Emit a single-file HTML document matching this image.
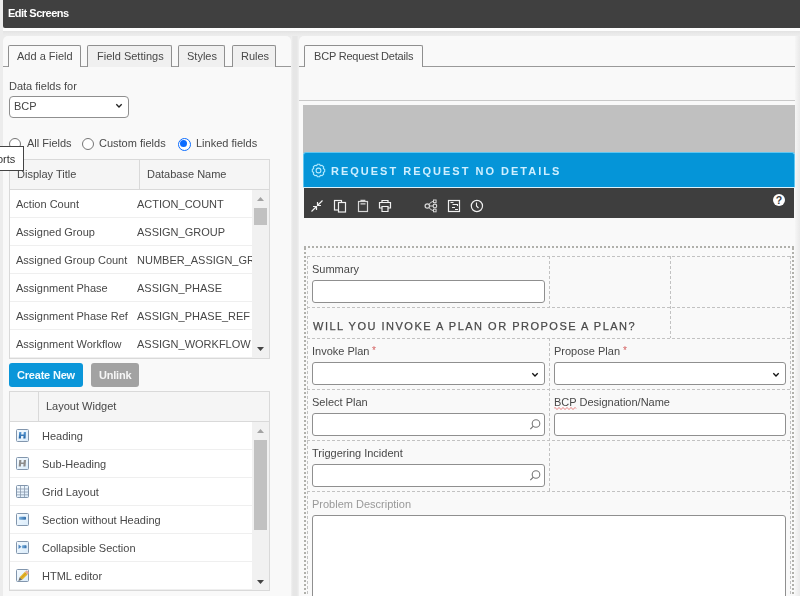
<!DOCTYPE html>
<html><head><meta charset="utf-8">
<style>
*{box-sizing:border-box;margin:0;padding:0}
html,body{width:800px;height:596px;overflow:hidden}
body{position:relative;background:#ececec;font-family:"Liberation Sans",sans-serif;font-size:11px;color:#484848}
.a{position:absolute}
.t{position:absolute;white-space:nowrap;line-height:1;will-change:transform}
#hdr{left:3px;top:0;width:797px;height:28px;background:#404040;border-radius:0 0 0 2px}
#hdr .t{left:5px;top:7.5px;color:#fff;font-weight:bold;letter-spacing:-0.5px}
#topstrip{left:3px;top:28px;width:797px;height:8px;background:linear-gradient(#fefefe 0,#fdfdfd 2.5px,#e4e4e4 3.5px,#eaeaea 6px,#ededed 8px);border-radius:0 0 0 3px}
#lp{left:3px;top:36px;width:288px;height:570px;background:#f9f9f9;border-radius:5px 5px 0 0}
#gap{left:291px;top:36px;width:8px;height:560px;background:linear-gradient(90deg,#f1f1f1 0,#e6e6e6 2px,#e6e6e6 6px,#f1f1f1 8px)}
#rp{left:299px;top:36px;width:501px;height:560px;background:#f9f9f9;border-radius:5px 0 0 0}
.tab{position:absolute;top:45px;height:22px;border:1px solid #8f8f8f;border-bottom:none;border-radius:2px 2px 0 0;background:#f0f0f0;color:#484848}
.tab.act{background:#f9f9f9;height:22px;z-index:2}
.tab span{position:absolute;top:5px;white-space:nowrap;line-height:1;will-change:transform}
.hl{position:absolute;height:1px;background:#9a9a9a}
.inp{position:absolute;background:#fff;border:1px solid #8f8f8f;border-radius:3px}
.radio{position:absolute;width:13px;height:13px;border:1px solid #767676;border-radius:50%;background:#fff}
.tbl{position:absolute;border:1px solid #d9d9d9;background:#fff}
.th{position:absolute;left:0;top:0;right:0;height:30px;background:#f5f5f5;border-bottom:1px solid #d9d9d9}
.row{position:absolute;left:0;height:28px;border-bottom:1px solid #efefef;width:242px}
.sb{position:absolute;background:#f1f1f1}
.thumb{position:absolute;background:#c1c1c1}
.btn{position:absolute;height:24px;border-radius:3px;color:#fff;font-weight:bold}
.dash{position:absolute;border-color:#c4c4c4;border-style:dashed;border-width:0}
.lbl{position:absolute;white-space:nowrap;line-height:1;color:#484848;will-change:transform}
</style></head><body>
<div id="hdr" class="a"><span class="t">Edit Screens</span></div>
<div id="topstrip" class="a"></div>

<!-- LEFT PANEL -->
<div id="lp" class="a"></div>
<div id="gap" class="a"></div>
<div class="hl" style="left:3px;top:66px;width:288px"></div>
<div class="tab act" style="left:8px;width:73px"><span style="left:8px">Add a Field</span></div>
<div class="tab" style="left:87px;width:85px"><span style="left:9px">Field Settings</span></div>
<div class="tab" style="left:178px;width:47px"><span style="left:8px">Styles</span></div>
<div class="tab" style="left:232px;width:44px"><span style="left:8px">Rules</span></div>

<span class="t" style="left:9px;top:81px">Data fields for</span>
<div class="inp" style="left:9px;top:96px;width:120px;height:22px;border-radius:4px"></div>
<span class="t" style="left:13.5px;top:101px;color:#444">BCP</span>
<svg class="a" style="left:115px;top:103px" width="8" height="6" viewBox="0 0 8 6"><path d="M1.3 1.3 L4 4 L6.7 1.3" stroke="#222" stroke-width="1.35" fill="none"/></svg>

<div class="radio" style="left:9px;top:138px;width:12px;height:12px"></div>
<span class="t" style="left:27px;top:138px">All Fields</span>
<div class="radio" style="left:82px;top:138px;width:12px;height:12px"></div>
<span class="t" style="left:99px;top:138px">Custom fields</span>
<div class="radio" style="left:177.5px;top:137.5px;border:1.5px solid #0b6cff"><div class="a" style="left:1.5px;top:1.5px;width:7px;height:7px;border-radius:50%;background:#0b6cff"></div></div>
<span class="t" style="left:196px;top:138px">Linked fields</span>

<!-- table 1 -->
<div class="tbl" style="left:9px;top:159px;width:261px;height:200px;overflow:hidden">
  <div class="th"><div class="a" style="left:129px;top:0;width:1px;height:30px;background:#d9d9d9"></div>
    <span class="t" style="left:7px;top:9px">Display Title</span>
    <span class="t" style="left:137px;top:9px">Database Name</span>
  </div>
  <div class="row" style="top:30px"><span class="t" style="left:6px;top:9px">Action Count</span><span class="t" style="left:127px;top:9px">ACTION_COUNT</span></div>
  <div class="row" style="top:58px"><span class="t" style="left:6px;top:9px">Assigned Group</span><span class="t" style="left:127px;top:9px">ASSIGN_GROUP</span></div>
  <div class="row" style="top:86px"><span class="t" style="left:6px;top:9px">Assigned Group Count</span><span class="t" style="left:127px;top:9px">NUMBER_ASSIGN_GROUP</span></div>
  <div class="row" style="top:114px"><span class="t" style="left:6px;top:9px">Assignment Phase</span><span class="t" style="left:127px;top:9px">ASSIGN_PHASE</span></div>
  <div class="row" style="top:142px"><span class="t" style="left:6px;top:9px">Assignment Phase Ref</span><span class="t" style="left:127px;top:9px">ASSIGN_PHASE_REF</span></div>
  <div class="row" style="top:170px"><span class="t" style="left:6px;top:9px">Assignment Workflow</span><span class="t" style="left:127px;top:9px">ASSIGN_WORKFLOW</span></div>
  <div class="sb" style="left:242px;top:30px;width:17px;height:168px"></div>
  <div class="thumb" style="left:244px;top:48px;width:13px;height:17px"></div>
  <svg class="a" style="left:247px;top:37px" width="7" height="4"><path d="M0 4 L3.5 0 L7 4Z" fill="#a3a3a3"/></svg>
  <svg class="a" style="left:247px;top:187px" width="7" height="4"><path d="M0 0 L3.5 4 L7 0Z" fill="#444"/></svg>
</div>

<!-- tooltip -->
<div class="a" style="left:-1px;top:146px;width:25px;height:25px;background:#fff;border:1px solid #444"></div>
<span class="t" style="left:-3px;top:154px;color:#333">orts</span>

<div class="btn" style="left:9px;top:363px;width:74px;background:#0a96d9"><span class="t" style="left:8px;top:7px;letter-spacing:-0.2px;color:#f2fbff">Create New</span></div>
<div class="btn" style="left:91px;top:363px;width:48px;background:#a2a2a2"><span class="t" style="left:7.5px;top:7px;letter-spacing:-0.2px;color:#f6f6f6">Unlink</span></div>

<!-- table 2 -->
<div class="tbl" style="left:9px;top:391px;width:261px;height:200px;overflow:hidden">
  <div class="th"><div class="a" style="left:28px;top:0;width:1px;height:30px;background:#d9d9d9"></div>
    <span class="t" style="left:36px;top:9px">Layout Widget</span>
  </div>
  <div class="row" style="top:30px"><span class="t" style="left:32px;top:9px">Heading</span></div>
  <div class="row" style="top:58px"><span class="t" style="left:32px;top:9px">Sub-Heading</span></div>
  <div class="row" style="top:86px"><span class="t" style="left:32px;top:9px">Grid Layout</span></div>
  <div class="row" style="top:114px"><span class="t" style="left:32px;top:9px">Section without Heading</span></div>
  <div class="row" style="top:142px"><span class="t" style="left:32px;top:9px">Collapsible Section</span></div>
  <div class="row" style="top:170px"><span class="t" style="left:32px;top:9px">HTML editor</span></div>
  <div class="sb" style="left:242px;top:30px;width:17px;height:168px"></div>
  <div class="thumb" style="left:244px;top:48px;width:13px;height:90px"></div>
  <svg class="a" style="left:247px;top:37px" width="7" height="4"><path d="M0 4 L3.5 0 L7 4Z" fill="#a3a3a3"/></svg>
  <svg class="a" style="left:247px;top:187.5px" width="7" height="4"><path d="M0 0 L3.5 4 L7 0Z" fill="#444"/></svg>
</div>


<svg class="a" style="left:0;top:0;z-index:3" width="300" height="596">
 <defs>
  <linearGradient id="ib" x1="0" y1="0" x2="1" y2="1"><stop offset="0" stop-color="#f6fbff"/><stop offset="1" stop-color="#d9ebfa"/></linearGradient>
  <linearGradient id="bb" x1="0" y1="0" x2="1" y2="0"><stop offset="0" stop-color="#7db4e0"/><stop offset="1" stop-color="#2f6aa8"/></linearGradient>
 </defs>
 <g stroke="#8296ad" stroke-width="1" fill="url(#ib)">
  <rect x="16.5" y="429.5" width="12" height="12" rx="1"/>
  <rect x="16.5" y="457.5" width="12" height="12" rx="1"/>
  <rect x="16.5" y="485.5" width="12" height="12" rx="1"/>
  <rect x="16.5" y="513.5" width="12" height="12" rx="1"/>
  <rect x="16.5" y="541.5" width="12" height="12" rx="1"/>
  <rect x="16.5" y="569.5" width="12" height="12" rx="1"/>
 </g>
 <linearGradient id="hb" x1="0" y1="0" x2="0" y2="1"><stop offset="0" stop-color="#5b9bd5"/><stop offset="1" stop-color="#1f5fa0"/></linearGradient><path d="M19.20 432.00 L21.40 432.00 L21.20 434.60 L23.60 434.60 L23.80 432.00 L26.00 432.00 L25.50 438.60 L23.30 438.60 L23.50 436.10 L21.10 436.10 L20.90 438.60 L18.70 438.60 Z" fill="url(#hb)"/>
 <path d="M19.20 460.00 L21.40 460.00 L21.20 462.60 L23.60 462.60 L23.80 460.00 L26.00 460.00 L25.50 466.60 L23.30 466.60 L23.50 464.10 L21.10 464.10 L20.90 466.60 L18.70 466.60 Z" fill="#8c8c8c"/>
 <path d="M20.5 486 L20.5 497 M24.5 486 L24.5 497 M17 489 L28 489 M17 492 L28 492 M17 494.8 L28 494.8" stroke="#8a9aae" stroke-width="0.8"/>
 <rect x="19" y="516.8" width="7" height="3" rx="0.8" fill="url(#bb)"/>
 <path d="M18.5 544.5 L21.5 546.8 L18.5 549 Z" fill="#4f86bf"/>
 <rect x="22" y="545.3" width="4.5" height="3" rx="0.6" fill="url(#bb)"/>
 <path d="M19.6 577.2 L25 571.8 L27.6 574.4 L22.2 579.8 Z" fill="#e3b326"/><path d="M20.8 578.4 L26.2 573" stroke="#c8901a" stroke-width="0.7"/><path d="M25 571.8 L26 570.8 Q26.7 570.2 27.4 570.9 L28.5 572 Q29.1 572.7 28.5 573.4 L27.6 574.4 Z" fill="#e8a898"/><path d="M19.6 577.2 L22.2 579.8 L18.4 581 Z" fill="#6a6a6a"/>
</svg>

<!-- RIGHT PANEL -->
<div id="rp" class="a"></div>
<div class="hl" style="left:299px;top:66px;width:501px"></div>
<div class="tab act" style="left:304px;width:119px"><span style="left:8.5px;letter-spacing:-0.2px">BCP Request Details</span></div>
<div class="a" style="left:299px;top:100px;width:501px;height:1px;background:#c8c8c8"></div>
<div class="a" style="left:303px;top:105px;width:492px;height:48px;background:#c0c0c0"></div>
<div class="a" style="left:303px;top:152px;width:492px;height:35px;background:#0595d8;border:1px solid #62c6f0;border-bottom:none;border-radius:3px 3px 0 0"></div>
<svg class="a" style="left:310px;top:162px" width="17" height="17" viewBox="0 0 17 17"><path d="M13.53 6.82 L14.68 7.30 L14.68 9.70 L13.53 10.18 L13.24 10.86 L13.72 12.02 L12.02 13.72 L10.86 13.24 L10.18 13.53 L9.70 14.68 L7.30 14.68 L6.82 13.53 L6.14 13.24 L4.98 13.72 L3.28 12.02 L3.76 10.86 L3.47 10.18 L2.32 9.70 L2.32 7.30 L3.47 6.82 L3.76 6.14 L3.28 4.98 L4.98 3.28 L6.14 3.76 L6.82 3.47 L7.30 2.32 L9.70 2.32 L10.18 3.47 L10.86 3.76 L12.02 3.28 L13.72 4.98 L13.24 6.14 Z" fill="none" stroke="#b4eaff" stroke-width="1.1" stroke-linejoin="round"/><circle cx="8.5" cy="8.5" r="2.4" fill="none" stroke="#b4eaff" stroke-width="1.1"/></svg>
<span class="t" style="left:331px;top:166px;color:#cfefff;font-weight:bold;letter-spacing:2px">REQUEST REQUEST NO DETAILS</span>
<div class="a" style="left:303px;top:187px;width:492px;height:1px;background:#d9f1fb"></div>
<div class="a" style="left:304px;top:188px;width:490px;height:30px;background:#3e3e3e"></div>
<svg class="a" style="left:304px;top:188px" width="490" height="30" viewBox="304 188 490 30">
 <g fill="none" stroke="#f0f0f0" stroke-width="1.2">
  <path d="M311.5 211.5 L316 207 M313 206.5 L316.5 206.5 L316.5 210"/>
  <path d="M322.5 200.5 L318 205 M321 205.5 L317.5 205.5 L317.5 202"/>
  <rect x="334.5" y="200.5" width="7" height="9.5"/>
  <rect x="338.5" y="202.5" width="7" height="9.5" fill="#3e3e3e"/>
  <rect x="358.5" y="201.5" width="9" height="10" stroke="#d8d8d8"/>
  <path d="M361 201.5 L361 200.3 L364.8 200.3 L364.8 201.5 M360.5 203.8 L365.5 203.8" stroke="#d8d8d8"/>
  <path d="M382 202.5 L382 200.5 L388 200.5 L388 202.5 M381.5 208 L379.5 208 L379.5 202.5 L390.5 202.5 L390.5 208 L388.5 208 M382 206.5 L388 206.5 L388 211.5 L382 211.5 Z"/>
  <circle cx="427.3" cy="206" r="2.2" stroke="#d8d8d8"/>
  <circle cx="434.9" cy="206" r="1.8" stroke="#d8d8d8"/>
  <rect x="433.5" y="200" width="2.6" height="2.6" stroke="#d8d8d8" stroke-width="1"/>
  <rect x="433.5" y="209.2" width="2.6" height="2.6" stroke="#d8d8d8" stroke-width="1"/>
  <path d="M429.5 206 L433 206 M429 204.3 Q431 201.8 433.4 201.3 M429 207.7 Q431 210.2 433.4 210.7" stroke="#d8d8d8" stroke-width="1"/>
  <rect x="448.5" y="200.5" width="11" height="11"/>
  <path d="M450.5 202.5 L453.5 202.5 M452.5 204.5 L457.5 204.5 L457.5 206 M452 207.5 L455 207.5 M455 209.5 L458 209.5" stroke-width="1.1"/>
  <circle cx="476.9" cy="206" r="5.6"/>
  <path d="M476.5 202.5 L476.5 206 L478.5 208" stroke-width="1.1"/>
 </g>
 <circle cx="779" cy="200" r="6" fill="#fff"/>
 <text x="779" y="204" text-anchor="middle" font-family="Liberation Sans" font-weight="bold" font-size="10.5" fill="#3e3e3e">?</text>
</svg>

<div class="a" style="left:795px;top:36px;width:5px;height:560px;background:linear-gradient(90deg,#f6f6f6,#e9e9e9)"></div>
<!-- dotted outer & dashed grid -->
<svg class="a" style="left:0;top:0" width="800" height="596">
 <g fill="none" stroke="#b0b0ab" stroke-width="2" stroke-dasharray="2 2">
  <path d="M304 247 L794 247"/>
  <path d="M305 248 L305 596"/>
  <path d="M793 248 L793 596"/>
 </g>
 <g fill="none" stroke="#c2c2c2" stroke-width="1" stroke-dasharray="3 2">
  <path d="M307 256.5 L791 256.5"/>
  <path d="M307 307.5 L791 307.5"/>
  <path d="M307 338.5 L791 338.5"/>
  <path d="M307 389.5 L791 389.5"/>
  <path d="M307 440.5 L791 440.5"/>
  <path d="M307 491.5 L791 491.5"/>
  <path d="M307.5 256 L307.5 596"/>
  <path d="M790.5 256 L790.5 596"/>
  <path d="M549.5 256 L549.5 307 M549.5 338 L549.5 491"/>
  <path d="M670.5 256 L670.5 338"/>
 </g>
</svg>

<span class="lbl" style="left:312px;top:264px">Summary</span>
<div class="inp" style="left:312px;top:280px;width:233px;height:23px"></div>

<span class="t" style="left:312.5px;top:321px;color:#4a4a4a;letter-spacing:1.5px;-webkit-text-stroke:0.25px #4a4a4a">WILL YOU INVOKE A PLAN OR PROPOSE A PLAN?</span>

<span class="lbl" style="left:312px;top:346px">Invoke Plan</span><span class="t" style="left:372px;top:345.5px;font-size:10px;color:#d46060">*</span>
<div class="inp" style="left:312px;top:362px;width:233px;height:23px"></div>
<svg class="a" style="left:531px;top:372px" width="8" height="6"><path d="M1.3 1.3 L4 4 L6.7 1.3" stroke="#111" stroke-width="1.35" fill="none"/></svg>
<span class="lbl" style="left:554px;top:346px">Propose Plan</span><span class="t" style="left:622.5px;top:345.5px;font-size:10px;color:#d46060">*</span>
<div class="inp" style="left:554px;top:362px;width:232px;height:23px"></div>
<svg class="a" style="left:772px;top:372px" width="8" height="6"><path d="M1.3 1.3 L4 4 L6.7 1.3" stroke="#111" stroke-width="1.35" fill="none"/></svg>

<span class="lbl" style="left:312px;top:397px">Select Plan</span>
<div class="inp" style="left:312px;top:413px;width:233px;height:23px"></div>
<svg class="a" style="left:528px;top:417px" width="14" height="14"><circle cx="8" cy="6.5" r="3.8" stroke="#777" stroke-width="1.1" fill="none"/><path d="M5.3 9.2 L2.3 12.2" stroke="#777" stroke-width="1.2"/></svg>
<span class="lbl" style="left:554px;top:397px">BCP Designation/Name</span>
<svg class="a" style="left:554px;top:406px" width="24" height="4"><path d="M0 2.5 Q1 0.5 2 2.5 T4 2.5 T6 2.5 T8 2.5 T10 2.5 T12 2.5 T14 2.5 T16 2.5 T18 2.5 T20 2.5 T22 2.5" stroke="#e05050" stroke-width="0.8" fill="none"/></svg>
<div class="inp" style="left:554px;top:413px;width:232px;height:23px"></div>

<span class="lbl" style="left:312px;top:448px">Triggering Incident</span>
<div class="inp" style="left:312px;top:464px;width:233px;height:23px"></div>
<svg class="a" style="left:528px;top:468px" width="14" height="14"><circle cx="8" cy="6.5" r="3.8" stroke="#777" stroke-width="1.1" fill="none"/><path d="M5.3 9.2 L2.3 12.2" stroke="#777" stroke-width="1.2"/></svg>

<span class="lbl" style="left:312px;top:499px;color:#999">Problem Description</span>
<div class="inp" style="left:312px;top:515px;width:474px;height:100px"></div>

</body></html>
